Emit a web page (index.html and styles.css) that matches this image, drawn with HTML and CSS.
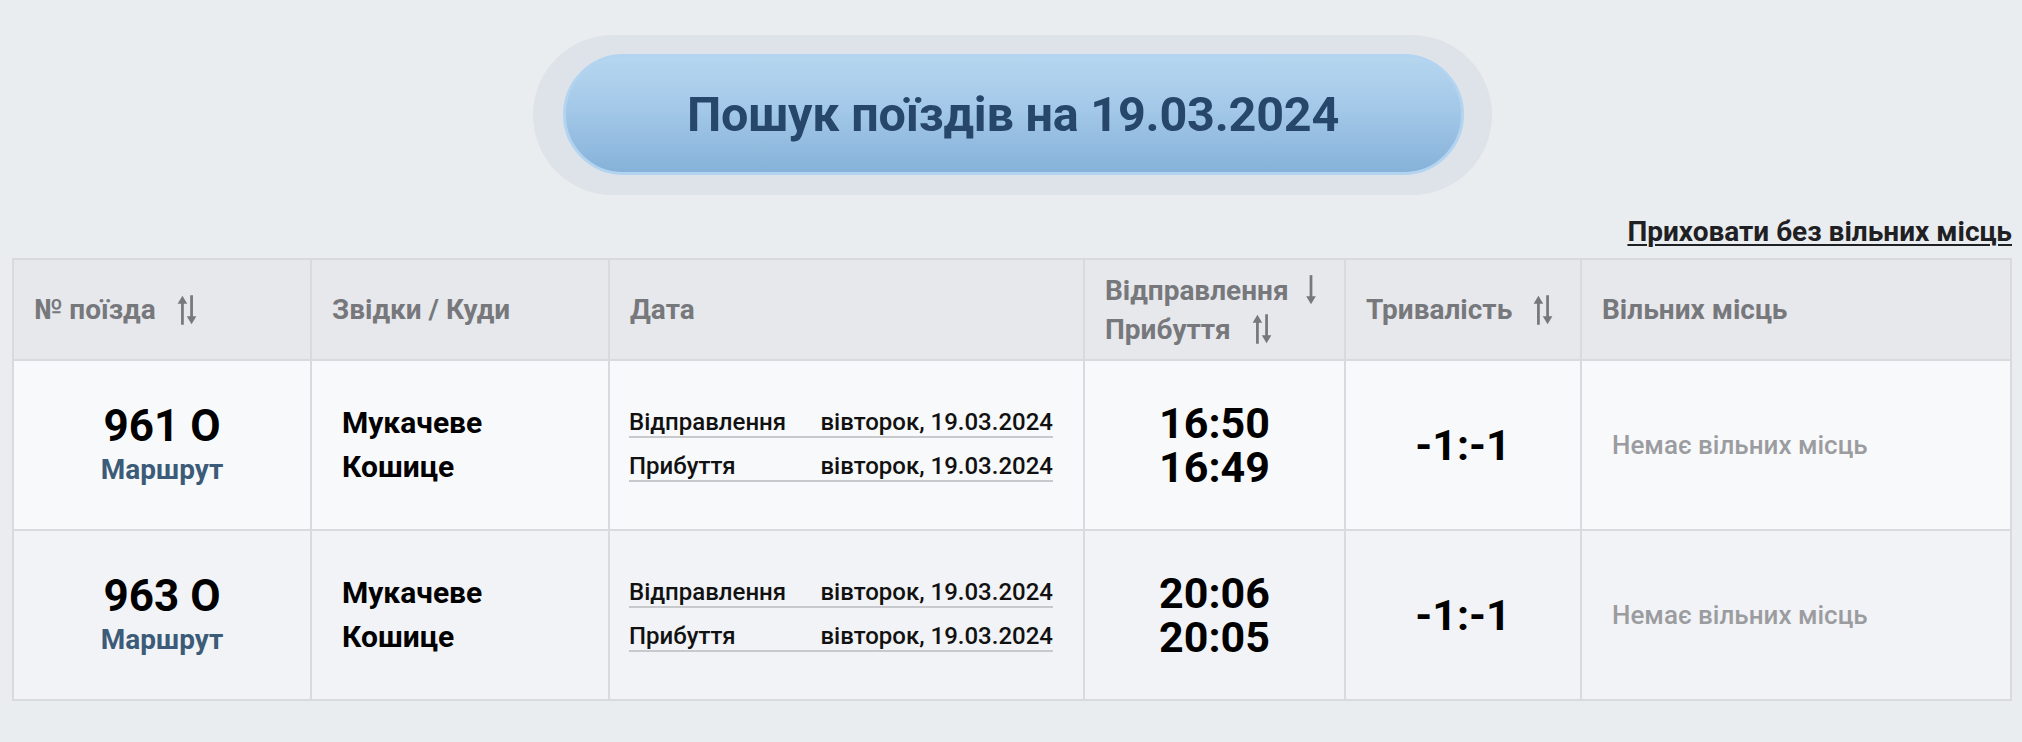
FILE: index.html
```html
<!DOCTYPE html>
<html lang="uk">
<head>
<meta charset="utf-8">
<title>Пошук поїздів</title>
<link rel="stylesheet" href="styles.css">
</head>
<body>
<div class="page">
  <div class="search-wrap">
    <div class="search-outer">
      <div class="search-btn">Пошук поїздів на 19.03.2024</div>
    </div>
  </div>
  <div class="toolbar">
    <a class="hide-link" href="#">Приховати без вільних місць</a>
  </div>
  <table class="trains">
    <colgroup>
      <col class="c-num"><col class="c-route"><col class="c-date"><col class="c-time"><col class="c-dur"><col class="c-seats">
    </colgroup>
    <thead>
      <tr>
        <th><span class="th-in">№ поїзда<svg class="sort" viewBox="0 0 18 28" width="22" height="32"><path d="M5 27V6M13 1v21" stroke="currentColor" stroke-width="2.4" fill="none"/><path d="M0.8 8.5L5 1.5 9.2 8.5Z M8.8 19.5L13 26.5 17.2 19.5Z" fill="currentColor"/></svg></span></th>
        <th>Звідки / Куди</th>
        <th>Дата</th>
        <th>
          <div class="th-line">Відправлення<svg class="sort one" viewBox="0 0 10 28" width="12" height="32"><path d="M5 1v21" stroke="currentColor" stroke-width="2.4" fill="none"/><path d="M0.8 19.5L5 26.5 9.2 19.5Z" fill="currentColor"/></svg></div>
          <div class="th-line">Прибуття<svg class="sort" viewBox="0 0 18 28" width="22" height="32"><path d="M5 27V6M13 1v21" stroke="currentColor" stroke-width="2.4" fill="none"/><path d="M0.8 8.5L5 1.5 9.2 8.5Z M8.8 19.5L13 26.5 17.2 19.5Z" fill="currentColor"/></svg></div>
        </th>
        <th><span class="th-in">Тривалість<svg class="sort" viewBox="0 0 18 28" width="22" height="32"><path d="M5 27V6M13 1v21" stroke="currentColor" stroke-width="2.4" fill="none"/><path d="M0.8 8.5L5 1.5 9.2 8.5Z M8.8 19.5L13 26.5 17.2 19.5Z" fill="currentColor"/></svg></span></th>
        <th>Вільних місць</th>
      </tr>
    </thead>
    <tbody>
      <tr class="row-a">
        <td class="num"><div class="train-no">961 О</div><a class="route-link" href="#">Маршрут</a></td>
        <td class="stations"><div>Мукачеве</div><div>Кошице</div></td>
        <td class="dates">
          <div class="date-line"><span>Відправлення</span><span>вівторок, 19.03.2024</span></div>
          <div class="date-line"><span>Прибуття</span><span>вівторок, 19.03.2024</span></div>
        </td>
        <td class="times"><div>16:50</div><div>16:49</div></td>
        <td class="dur">-1:-1</td>
        <td class="seats">Немає вільних місць</td>
      </tr>
      <tr class="row-b">
        <td class="num"><div class="train-no">963 О</div><a class="route-link" href="#">Маршрут</a></td>
        <td class="stations"><div>Мукачеве</div><div>Кошице</div></td>
        <td class="dates">
          <div class="date-line"><span>Відправлення</span><span>вівторок, 19.03.2024</span></div>
          <div class="date-line"><span>Прибуття</span><span>вівторок, 19.03.2024</span></div>
        </td>
        <td class="times"><div>20:06</div><div>20:05</div></td>
        <td class="dur">-1:-1</td>
        <td class="seats">Немає вільних місць</td>
      </tr>
    </tbody>
  </table>
</div>
</body>
</html>
```

FILE: styles.css
```css
* { box-sizing: border-box; }

html, body {
  margin: 0;
  background: #e9edf0;
  font-family: Roboto, "Noto Sans", "Liberation Sans", sans-serif;
}

.page {
  padding: 35px 10px 0 12px;
}

.search-wrap {
  display: flex;
  justify-content: center;
}

.search-outer {
  padding: 19px 28px 20px 30px;
  border-radius: 80px;
  background: #dde3e8;
}

.search-btn {
  width: 901px;
  height: 121px;
  display: flex;
  align-items: center;
  justify-content: center;
  border-radius: 61px;
  border: 3px solid #b3d4f0;
  background: linear-gradient(to bottom, #b6d6ef 0%, #a3c8e8 45%, #86b2d9 100%);
  color: #26466a;
  font-weight: 700;
  font-size: 48.5px;
  letter-spacing: -0.2px;
}

.toolbar {
  display: flex;
  justify-content: flex-end;
  margin-top: 21px;
  margin-bottom: 10px;
}

.hide-link {
  font-size: 28px;
  line-height: 32px;
  font-weight: 700;
  color: #1f2023;
  text-decoration: underline;
  text-decoration-thickness: 2px;
  text-underline-offset: 3px;
}

.trains {
  width: 100%;
  border-collapse: collapse;
  table-layout: fixed;
  border: 2px solid #d9dadf;
}

.c-num { width: 298px; }
.c-route { width: 298px; }
.c-date { width: 475px; }
.c-time { width: 261px; }
.c-dur { width: 236px; }

.trains th,
.trains td {
  border: 2px solid #d9dadf;
  vertical-align: middle;
}

.trains th {
  height: 101px;
  background: #e7e8ec;
  color: #77787c;
  font-size: 28px;
  font-weight: 700;
  text-align: left;
  padding: 0 20px;
  white-space: nowrap;
}

.th-in,
.th-line {
  display: flex;
  align-items: center;
}

.th-line { line-height: 39px; }

.sort {
  margin-left: 20px;
  flex: none;
}

.sort.one { margin-left: 16px; }

.trains td {
  height: 170px;
  padding: 0 20px;
  color: #000;
}

.row-a td { background: #f8f9fb; }
.row-b td { background: #f2f3f6; }

.num { text-align: center; }

.train-no {
  font-size: 44px;
  font-weight: 700;
  line-height: 46px;
}

.route-link {
  display: inline-block;
  margin-top: 4px;
  font-size: 28px;
  font-weight: 700;
  line-height: 34px;
  color: #3b5b78;
  text-decoration: none;
}

.stations {
  font-size: 30px;
  font-weight: 700;
  line-height: 44px;
}

.trains td.stations { padding-left: 30px; }

.trains td.dates { padding: 0 30px 0 19px; }

.date-line {
  display: flex;
  justify-content: space-between;
  font-size: 24px;
  font-weight: 500;
  line-height: 27px;
  padding-bottom: 0;
  border-bottom: 2px solid #c8c9cd;
  color: #111;
}

.date-line + .date-line { margin-top: 15px; }

.times {
  text-align: center;
  font-size: 43px;
  font-weight: 700;
  line-height: 44px;
}

.dur {
  text-align: center;
  font-size: 43px;
  font-weight: 700;
}

.trains td.seats {
  padding-left: 30px;
  font-size: 26px;
  font-weight: 500;
  color: #9b9ca0;
}
```
